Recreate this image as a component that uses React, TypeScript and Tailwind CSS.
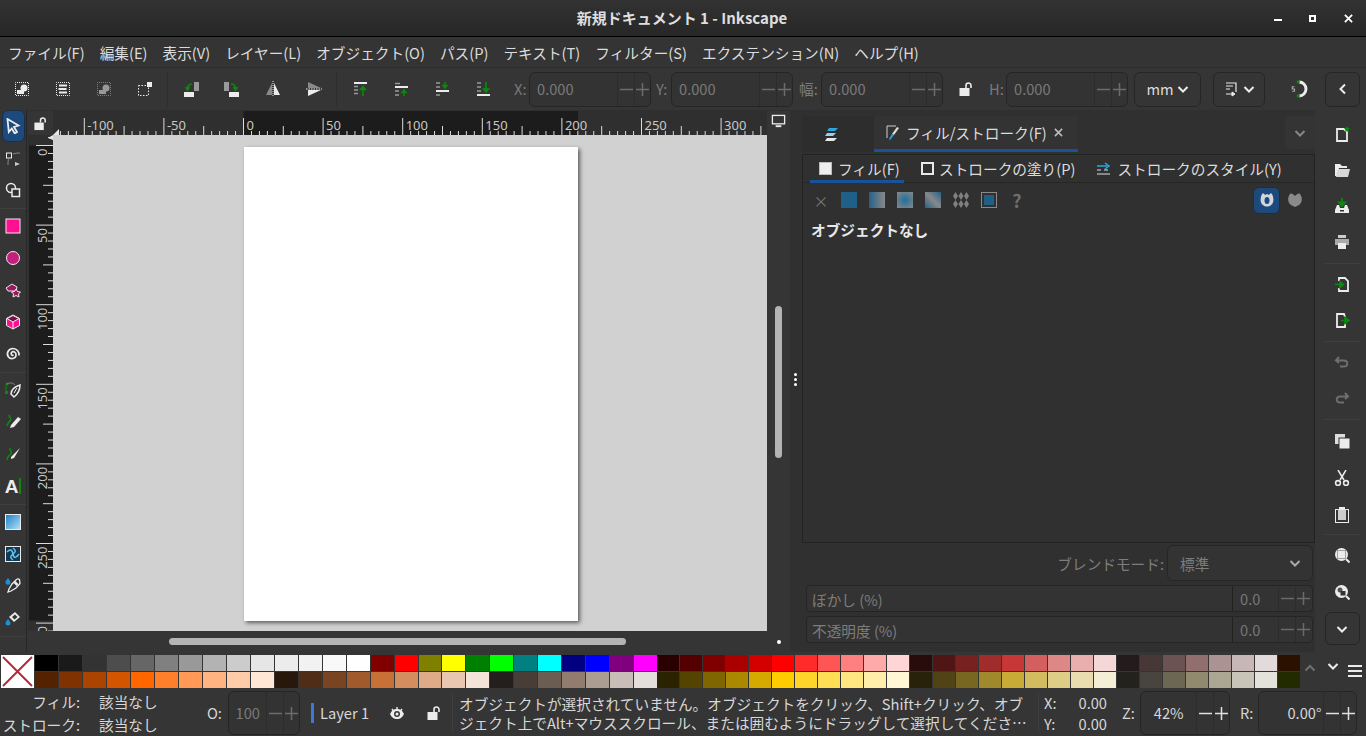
import { ReactNode } from "react";

const W = "#ececec";
const G = "#0a8a0a";
const DIM = "#7d7d7d";

function Ic({ children, size = 16 }: { children: ReactNode; size?: number }) {
  return (
    <svg width={size} height={size} viewBox="0 0 16 16" fill="none">
      {children}
    </svg>
  );
}

const dotted = (c = W) => (
  <rect x="1.500" y="1.500" width="13" height="13" stroke={c} strokeWidth="1" strokeDasharray="1 1" strokeDashoffset="0.500" />
);

// top toolbar icons
const topIcons: ReactNode[] = [
  <Ic key="a">{dotted()}<rect x="3" y="9" width="7" height="4" fill={W} /><circle cx="10" cy="7" r="3.500" fill={W} /></Ic>,
  <Ic key="b">{dotted()}<path d="M4 4.500h8M3.500 8h8M4 11.500h8" stroke={W} strokeWidth="2" /></Ic>,
  <Ic key="c">{dotted(DIM)}<rect x="3" y="9" width="7" height="4" fill="#999" /><circle cx="10" cy="7" r="3.500" fill="#999" /></Ic>,
  <Ic key="d"><path d="M1.500 4.500h10v10h-10z" stroke={W} strokeDasharray="1.500 1.500" /><rect x="10" y="1" width="5" height="5" fill={W} /></Ic>,
  <Ic key="e"><rect x="1" y="11" width="10" height="5" fill={W} /><rect x="11" y="1" width="5" height="9" fill="#999" /><path d="M9 3C6 3 4.500 5 4.500 8M2.500 6l2 3 2-3" stroke={G} strokeWidth="1.600" /></Ic>,
  <Ic key="f"><rect x="5" y="11" width="10" height="5" fill={W} /><rect x="0" y="1" width="5" height="9" fill="#999" /><path d="M7 3c3 0 4.500 2 4.500 5M9.500 6l2 3 2-3" stroke={G} strokeWidth="1.600" /></Ic>,
  <Ic key="g"><path d="M7 2v12H1z" fill="#8a8a8a" /><path d="M9 2v12h6z" fill={W} /><path d="M8 0v16" stroke={W} strokeDasharray="1 1" /></Ic>,
  <Ic key="h"><path d="M2 1l13 6H2z" fill="#8a8a8a" /><path d="M2 15l13-6H2z" fill={W} /><path d="M0 8h16" stroke={W} strokeDasharray="1.500 1" /></Ic>,
  <Ic key="i"><rect x="2" y="1" width="13" height="2" fill={W} /><path d="M2 5.500h4M2 9h4M2 12.500h4" stroke="#999" strokeWidth="1.600" /><path d="M11 15V6M8.500 8.500L11 5.500l2.500 3z" stroke={G} strokeWidth="1.600" fill={G} /></Ic>,
  <Ic key="j"><path d="M2 2.500h5M2 10h4M2 14h4" stroke="#999" strokeWidth="1.600" /><rect x="2" y="5" width="13" height="2" fill={W} /><path d="M11 15V10M9 11.500l2-2.500 2 2.500z" stroke={G} strokeWidth="1.500" fill={G} /></Ic>,
  <Ic key="k"><path d="M2 2h4M2 6h4M2 14h4" stroke="#999" strokeWidth="1.600" /><rect x="2" y="9" width="13" height="2" fill={W} /><path d="M11 1v5M9 4.500L11 7l2-2.500z" stroke={G} strokeWidth="1.500" fill={G} /></Ic>,
  <Ic key="l"><path d="M2 2h4M2 6h4M2 10h4" stroke="#999" strokeWidth="1.600" /><rect x="2" y="13" width="13" height="2" fill={W} /><path d="M11 1v9M8.500 8L11 11l2.500-3z" stroke={G} strokeWidth="1.600" fill={G} /></Ic>,
];

const LockOpen = ({ size = 16 }: { size?: number }) => (
  <Ic size={size}>
    <rect x="1.500" y="7" width="10" height="8" fill={W} />
    <path d="M8 7V4.500a2.500 2.500 0 0 1 5 0V7" stroke={W} strokeWidth="1.600" />
  </Ic>
);

const Chevron = ({ c = W, dir = "down" }: { c?: string; dir?: string }) => (
  <svg width="12" height="12" viewBox="0 0 12 12" fill="none">
    <path d={dir === "down" ? "M1.500 4l4.500 4.500L10.500 4" : dir === "up" ? "M1.500 8.500L6 4l4.500 4.500" : "M8 1.500L3.500 6 8 10.500"} stroke={c} strokeWidth="2" />
  </svg>
);

function PlusMinus({ c = "#6c6c6c" }: { c?: string }) {
  return (
    <>
      <span className="w-[17px] h-full border-l border-[#2c2c2c] flex items-center justify-center">
        <svg width="13" height="13" viewBox="0 0 13 13"><path d="M0 6.500h13" stroke={c} strokeWidth="1.500" /></svg>
      </span>
      <span className="w-[16px] h-full border-l border-[#2c2c2c] flex items-center justify-center">
        <svg width="13" height="13" viewBox="0 0 13 13"><path d="M0 6.500h13M6.500 0v13" stroke={c} strokeWidth="1.500" /></svg>
      </span>
    </>
  );
}

function Field({ value }: { value: string }) {
  return (
    <div className="w-[122px] h-[35px] rounded-md border border-[#252525] bg-[#333333] flex items-center shrink-0 text-[#7a7a7a]">
      <span className="flex-1 pl-[7px]">{value}</span>
      <PlusMinus />
    </div>
  );
}

const menus = ["ファイル(F)", "編集(E)", "表示(V)", "レイヤー(L)", "オブジェクト(O)", "パス(P)", "テキスト(T)", "フィルター(S)", "エクステンション(N)", "ヘルプ(H)"];

// left toolbox, null = separator
const P = "#ff0f94";
const tools: (ReactNode | null)[] = [
  <Ic key="sel"><path d="M2.500 1l11 6.500-4.500 1.500 3 5-2.200 1.500-3-5-3 3.500z" stroke={W} strokeWidth="1.800" /></Ic>,
  <Ic key="node"><rect x="1.500" y="3" width="5" height="5" stroke={W} /><path d="M8 4c3-1 5-1 7-1M4 8c-1 2-1 4-1 7" stroke="#888" /><path d="M10 12l5 2-5 2z" fill="#ccc" /></Ic>,
  <Ic key="shape"><circle cx="6" cy="6" r="4.500" stroke={W} strokeWidth="1.500" /><rect x="7" y="7" width="7.500" height="7.500" fill="#333" stroke={W} strokeWidth="1.500" /></Ic>,
  null,
  <Ic key="rect"><rect x="1" y="1" width="14" height="14" fill={P} stroke={W} strokeWidth="1" /></Ic>,
  <Ic key="circ"><circle cx="8" cy="8" r="6.500" fill="#c41e7e" stroke={W} strokeWidth="1" /></Ic>,
  <Ic key="star"><path d="M1 6l6-4 5 3-1 4H3z" fill="#a0175f" stroke={W} /><path d="M11 7l1.500 2.500 3 .5-2 2 .5 3-3-1.500-3 1.500.5-3-2-2 3-.5z" fill="#a0175f" stroke={W} /></Ic>,
  <Ic key="box"><path d="M8 1l6.500 3.500v7L8 15l-6.500-3.500v-7z" fill={P} stroke={W} /><path d="M8 1.500L14 4.500 8 8 2 4.500z" fill="#7a0f4c" stroke={W} /><path d="M8 8v7" stroke={W} /></Ic>,
  <Ic key="spiral"><path d="M8.500 9c-1.500 1-3-1-2-2.500 2-2 5 0 4.500 3-.5 3.500-5.500 4-7.500 1.500C1 8 3 2.500 8 2.500c4 0 6.500 3.500 6 7" stroke={W} strokeWidth="1.700" /></Ic>,
  null,
  <Ic key="pen"><path d="M9 15l-3-3c0-4 3-7 9-9 0 5-2 9-6 12z" stroke={W} strokeWidth="1.500" /><path d="M9 11l3-5" stroke={W} /><path d="M1 3v8" stroke={G} /><rect x="0" y="9" width="3" height="3" fill={G} /><circle cx="2" cy="2" r="1.500" fill={G} /><path d="M2 2c4-2 6-1 8 1" stroke="#888" /></Ic>,
  <Ic key="pencil"><path d="M6 11l7-8 3 2-7 8-4 1z" fill={W} /><path d="M5 1c-3 1 3 4 0 6-2 1-2 3-3 5" stroke={G} strokeWidth="1.600" /></Ic>,
  <Ic key="call"><path d="M6 11l9-9-6 10-3 1z" fill={W} /><path d="M5 2c-1 3 3 3 1 6-2 2-4 2-4 6" stroke={G} strokeWidth="1.600" /></Ic>,
  <div key="text" className="flex items-center gap-[1px]">
    <span className="text-[19px] font-bold leading-none text-[#ececec] font-['Liberation_Sans',sans-serif]">A</span>
    <span className="w-[2px] h-[16px] bg-[#0a8a0a]" />
  </div>,
  null,
  <Ic key="grad"><defs><linearGradient id="lg" x1="0" y1="0" x2="1" y2="1"><stop offset="0" stopColor="#1b7fc4" /><stop offset="1" stopColor="#b5e2fa" /></linearGradient></defs><rect x=".5" y=".5" width="15" height="15" fill="url(#lg)" stroke={W} /></Ic>,
  <Ic key="mesh"><rect x=".5" y=".5" width="15" height="15" fill="#123a55" stroke={W} /><path d="M2 6c3-3 5-3 6 2s3 4 6 0M8 2c3 2 3 4 0 6s-3 4 0 6" stroke="#6cc3ee" strokeWidth="1.500" /></Ic>,
  <Ic key="drop"><path d="M14.500 1.500c-1-1-2.500-1-3.500.5L7 6l-3 5-1 3 3-1 5-3 4-4.500z" stroke={W} strokeWidth="1.300" fill="#333" /><path d="M9.500 4l3 3" stroke={W} strokeWidth="2.500" /><path d="M3 0c1.500 2 2.500 3 2.500 4.200a2.500 2.500 0 0 1-5 0C.5 3 1.500 2 3 0z" fill="#1c8fd6" /></Ic>,
  <Ic key="bucket"><path d="M4 7l6-5 5 5-6 5z" fill={W} /><path d="M7 7l3-2.500 2.500 2.500-3 2.500z" fill="#333" /><path d="M3 9c1.500 2 2.500 3 2.500 4a2.500 2.500 0 0 1-5 0c0-1 1-2 2.500-4z" fill="#1c8fd6" /></Ic>,
  null,
  <Ic key="tweak"><path d="M1 15c2-4 5-7 8-8 3 1 5 4 6 8z" fill={W} /></Ic>,
];

const swA1 = ["000000","1a1a1a","333333","4d4d4d","666666","808080","999999","b3b3b3","cccccc","e6e6e6","ececec","f2f2f2","f9f9f9","ffffff","800000","ff0000","808000","ffff00","008000","00ff00","008080","00ffff","000080","0000ff","800080","ff00ff"];
const swA2 = ["552200","803300","aa4400","d45500","ff6600","ff7f2a","ff9955","ffb380","ffccaa","ffe6d5","28170b","502d16","784421","a05a2c","c87137","d38d5f","deaa87","e9c6af","f4e3d7","241f1c","483e37","6c5d53","917c6f","ac9d93","c8beb7","e3dedb"];
const swB1 = ["2b0000","550000","800000","aa0000","d40000","ff0000","ff2a2a","ff5555","ff8080","ffaaaa","ffd5d5","280b0b","501616","782121","a02c2c","c83737","d35f5f","de8787","e9afaf","f4d7d7","241c1c","483737","6c5353","916f6f","ac9393","c8b7b7","e3dbdb","2b1100"];
const swB2 = ["2b2200","554400","806600","aa8800","d4aa00","ffcc00","ffd42a","ffdd55","ffe680","ffeeaa","fff6d5","28220b","504416","786721","a0892c","c8ab37","d3bc5f","decd87","e9ddaf","f4eed7","24221c","48453e","6c6753","918a6f","aca793","c8c4b7","e3e2db","222b00"];

function SwatchRow({ colors }: { colors: string[] }) {
  return (
    <div className="flex h-[16px] gap-px">
      {colors.map((c, i) => (
        <div key={i} className="flex-1" style={{ backgroundColor: `#${c}` }} />
      ))}
    </div>
  );
}

function HRuler() {
  const ticks = [];
  const x0 = 243.5 - 53;
  const step = 7.96;
  for (let i = -24; i <= 65; i++) {
    const x = x0 + i * step;
    const major = i % 10 === 0;
    const mid = i % 5 === 0;
    ticks.push(<line key={i} x1={x} x2={x} y1={major ? 7 : mid ? 15 : 20} y2={24} stroke="#dcdcdc" strokeWidth="1" />);
    if (major) {
      ticks.push(<text key={`t${i}`} x={x + 3} y={19} fill="#c8c8c8" fontSize="13">{i * 5}</text>);
    }
  }
  return (
    <svg width="714" height="24" className="block font-['Noto_Sans',sans-serif]">
      <rect x={x0} width="334.500" height="24" fill="#1c1c1c" />
      {ticks}
      <path d="M0 24l6-6v6z" fill="#e8e8e8" />
    </svg>
  );
}

function VRuler() {
  const ticks = [];
  const y0 = 10.5;
  const step = 7.96;
  for (let i = -1; i <= 61; i++) {
    const y = y0 + i * step;
    const major = i % 10 === 0;
    const mid = i % 5 === 0;
    ticks.push(<line key={i} y1={y} y2={y} x1={major ? 8 : mid ? 15 : 20} x2={25} stroke="#dcdcdc" strokeWidth="1" />);
    if (major) {
      ticks.push(
        <text key={`t${i}`} transform={`translate(19 ${y + 3}) rotate(-90)`} textAnchor="end" fill="#c8c8c8" fontSize="13">
          {i * 5}
        </text>
      );
    }
  }
  return (
    <svg width="25" height="496" className="block font-['Noto_Sans',sans-serif]">
      <rect x="1" y="10.500" width="24" height="475" fill="#1c1c1c" />
      {ticks}
      <path d="M25 0l-5 3 5 2z" fill="#e8e8e8" />
    </svg>
  );
}

const rightIcons: (ReactNode | null)[] = [
  <Ic key="n"><path d="M3 3h7l3 3v9H3z" stroke={W} strokeWidth="1.800" /><path d="M13 0l1 2 2 .3-1.500 1.500.5 2.200-2-1-2 1 .5-2.200L10 2.300l2-.3z" fill={G} /></Ic>,
  <Ic key="o"><path d="M1 2h5l2 2h5v2H5L3 14H1z" fill={W} /><path d="M4 7h12l-2 8H2z" fill="#d8d8d8" /></Ic>,
  <Ic key="s"><path d="M8 0v7M5 4.500L8 8l3-3.500z" stroke={G} strokeWidth="1.800" fill={G} /><path d="M3 7h2l1 3h4l1-3h2l2 5v3H1v-3z" fill={W} /><rect x="6" y="12" width="4" height="1.500" fill="#333" /></Ic>,
  <Ic key="p"><rect x="4" y="1" width="8" height="3" fill="#ccc" /><path d="M1 5h14v6H1z" fill="#aaa" /><rect x="4" y="9" width="8" height="6" fill={W} /></Ic>,
  null,
  <Ic key="i"><path d="M5 5V2h6l3 3v10H5v-3" stroke={W} strokeWidth="1.800" /><path d="M1 8.500h7M6 5.500l3.500 3-3.500 3z" stroke={G} strokeWidth="1.600" fill={G} /></Ic>,
  <Ic key="e"><path d="M11 5l-1-3H3v13h8v-3" stroke={W} strokeWidth="1.800" /><path d="M7 8.500h6M11 5.500l4 3-4 3z" stroke={G} strokeWidth="1.600" fill={G} /></Ic>,
  null,
  <Ic key="u"><path d="M5 3L2 6.500 5 9M2.500 6.500h7c5 0 5 6 0 6H6" stroke="#6e6e6e" strokeWidth="2" /></Ic>,
  <Ic key="r"><path d="M11 3l3 3.500L11 9M13.500 6.500h-7c-5 0-5 6 0 6H10" stroke="#6e6e6e" strokeWidth="2" /></Ic>,
  null,
  <Ic key="cp"><rect x="1" y="1" width="10" height="10" fill="#ddd" /><rect x="5" y="5" width="11" height="11" fill={W} stroke="#333" /></Ic>,
  <Ic key="ct"><path d="M4 0l6 10M12 0L6 10" stroke={W} strokeWidth="1.500" /><circle cx="4" cy="13" r="2.400" stroke={W} strokeWidth="1.600" /><circle cx="12" cy="13" r="2.400" stroke={W} strokeWidth="1.600" /></Ic>,
  <Ic key="pa"><rect x="1.500" y="2.500" width="13" height="13" stroke={W} /><path d="M4 2h8v11H4z" fill="#ccc" /><rect x="5" y="0" width="6" height="3" fill={W} /></Ic>,
  null,
  <Ic key="z1"><circle cx="7.500" cy="7.500" r="6.500" fill={W} /><rect x="3.500" y="3.500" width="8" height="8" stroke="#555" strokeDasharray="1 1" /><path d="M12 12l3.500 3.500" stroke={W} strokeWidth="2" /></Ic>,
  <Ic key="z2"><circle cx="7.500" cy="7.500" r="6.500" fill={W} /><circle cx="6" cy="6" r="2.500" fill="#555" /><rect x="6.500" y="7" width="5" height="4.500" fill="#333" /><path d="M12 12l3.500 3.500" stroke={W} strokeWidth="2" /></Ic>,
];

const paintIcons = [
  <span key="x" className="text-[15px] leading-none text-[#777]">×</span>,
  <div key="1" className="w-[16px] h-[16px] bg-[#1f6088]" />,
  <div key="2" className="w-[16px] h-[16px] bg-gradient-to-r from-[#1f6088] to-[#888888]" />,
  <div key="3" className="w-[16px] h-[16px] bg-[radial-gradient(circle,#1f6f9e,#888888)]" />,
  <div key="4" className="w-[16px] h-[16px] bg-gradient-to-tr from-[#1f6088] via-[#888888] to-[#1f6088]" />,
  <Ic key="5"><path d="M2.500 0L5 4 2.500 8 0 4zM8 0l2.500 4L8 8 5.500 4zM13.500 0L16 4l-2.500 4L11 4zM2.500 8L5 12l-2.500 4L0 12zM8 8l2.500 4L8 16l-2.500-4zM13.500 8l2.500 4-2.500 4-2.500-4z" fill="#808080" /></Ic>,
  <div key="6" className="w-[16px] h-[16px] border border-[#8a8a8a] p-[2px]"><div className="w-full h-full bg-[#1f6088]" /></div>,
  <span key="q" className="text-[18px] font-bold leading-none text-[#6e6e6e]">?</span>,
];

export default function App() {
  return (
    <div className="w-[1366px] h-[736px] overflow-hidden flex flex-col bg-[#353535] text-[14.670px] leading-[20px] text-[#e4e4e4] font-['Noto_Sans_CJK_JP','Noto_Sans',sans-serif]">
      {/* title bar */}
      <div className="h-[37px] shrink-0 flex items-center bg-gradient-to-b from-[#323232] to-[#272727] border-b border-black">
        <div className="w-[1259px] pl-[107px] text-center text-[15px] font-bold text-[#dedede]">新規ドキュメント 1 - Inkscape</div>
        <div className="flex items-center">
          <div className="w-[35px] ml-[3px] flex justify-center"><div className="w-[8px] h-[2px] mt-[4px] bg-white" /></div>
          <div className="w-[35px] flex justify-center"><div className="w-[3px] h-[3px] border-[2px] border-white box-content" /></div>
          <div className="w-[36px] flex justify-center">
            <svg width="9" height="9" viewBox="0 0 10 10"><path d="M1 1l8 8M9 1l-8 8" stroke="#fff" strokeWidth="2" /></svg>
          </div>
        </div>
      </div>

      {/* menu bar */}
      <div className="h-[31px] shrink-0 flex items-center gap-[15px] pl-[8px] bg-[#343434] border-b border-[#2c2c2c] text-[#dcdcdc]">
        {menus.map((m) => (
          <span key={m} className="pt-px">{m}</span>
        ))}
      </div>

      {/* command toolbar */}
      <div className="h-[42px] shrink-0 flex items-center pl-px text-[#7a7a7a]">
        {topIcons.slice(0, 4).map((ic, i) => (
          <div key={i} className="w-[41px] flex justify-center">{ic}</div>
        ))}
        <div className="w-[5px] h-[34px] flex justify-center"><div className="w-px bg-[#2d2d2d]" /></div>
        {topIcons.slice(4, 8).map((ic, i) => (
          <div key={i} className="w-[41px] flex justify-center">{ic}</div>
        ))}
        <div className="w-[5px] h-[34px] flex justify-center"><div className="w-px bg-[#2d2d2d]" /></div>
        {topIcons.slice(8).map((ic, i) => (
          <div key={i} className="w-[41px] flex justify-center">{ic}</div>
        ))}
        <span className="w-[15px] ml-[11px]">X:</span>
        <Field value="0.000" />
        <span className="w-[15px] ml-[5px]">Y:</span>
        <Field value="0.000" />
        <span className="w-[22px] ml-[6px] whitespace-nowrap">幅:</span>
        <Field value="0.000" />
        <div className="w-[46px] flex justify-center"><LockOpen /></div>
        <span className="w-[17px]">H:</span>
        <Field value="0.000" />
        <div className="ml-[6px] w-[67px] h-[35px] rounded-md border border-[#252525] flex items-center justify-center gap-[3px] text-[#dcdcdc]">
          mm <Chevron />
        </div>
        <div className="ml-[12px] w-[52px] h-[35px] rounded-md border border-[#252525] flex items-center justify-center gap-[3px]">
          <Ic><path d="M2 2h10v9M2 5h7M2 8h4" stroke={W} strokeWidth="1.200" /><path d="M2 13h8M8 11l3 2-3 2z" stroke={W} fill={W} /></Ic>
          <Chevron />
        </div>
        <div className="w-[60px] pl-[8px] flex justify-center">
          <Ic size={18}><path d="M8 1.800a6.200 6.200 0 0 1 0 12.400" stroke={W} strokeWidth="2.600" /><rect x="6" y="0.500" width="2.600" height="2.600" fill={G} /><rect x="6" y="12.900" width="2.600" height="2.600" fill={G} /><path d="M4 6H2v2h2v2H2" stroke="#aaa" /></Ic>
        </div>
        <div className="w-[35px] h-[35px] rounded-md border border-[#252525] flex items-center justify-center"><Chevron dir="left" /></div>
      </div>

      {/* main area */}
      <div className="h-[542px] shrink-0 flex overflow-hidden">
        {/* toolbox */}
        <div className="w-[26px] mr-px shrink-0 flex flex-col items-center border-r border-[#262626] box-content">
          {tools.map((t, i) =>
            t === null ? (
              <div key={i} className="h-[4px] w-full flex items-center shrink-0"><div className="h-px w-full bg-[#3f3f3f]" /></div>
            ) : (
              <div key={i} className={`h-[32px] shrink-0 flex items-center justify-center ${i === 0 ? "w-[23px] rounded-md border border-[#1d2d44] bg-[#1d4a7c]" : "w-full"}`}>
                {t}
              </div>
            )
          )}
        </div>

        {/* canvas with rulers */}
        <div className="w-[762px] shrink-0 flex flex-col">
          <div className="h-[25px] shrink-0 pt-px flex bg-[#2f2f2f]">
            <div className="w-[25px] flex items-center justify-center bg-[#353535]"><LockOpen size={15} /></div>
            <HRuler />
            <div className="w-[23px] flex justify-center pt-[3px] bg-[#353535]">
              <Ic size={15}><rect x="1.500" y="1.500" width="13" height="9" stroke={W} strokeWidth="1.400" /><rect x="5" y="12" width="6" height="2" fill={W} /></Ic>
            </div>
          </div>
          <div className="flex h-[496px] shrink-0">
            <div className="w-[25px] bg-[#2f2f2f]"><VRuler /></div>
            <div className="w-[714px] bg-[#d1d1d1] pl-[191px] pt-[12px]">
              <div className="w-[334px] h-[474px] bg-white shadow-[2px_2px_4px_rgba(0,0,0,0.55)]" />
            </div>
            <div className="w-[23px] flex justify-center pt-[171px]">
              <div className="w-[7px] h-[152px] rounded-full bg-[#b4b4b4]" />
            </div>
          </div>
          <div className="flex-1 flex items-center pl-[141px]">
            <div className="w-[457px] h-[7px] rounded-full bg-[#b4b4b4] mr-[151px]" />
            <div className="w-[4px] h-[4px] rounded-full bg-white" />
          </div>
        </div>

        {/* panel grip */}
        <div className="w-[12px] shrink-0 flex flex-col items-center justify-center gap-[2px] pr-px pb-[3px] bg-[#303030]">
          <div className="w-[3px] h-[3px] rounded-full bg-white" />
          <div className="w-[3px] h-[3px] rounded-full bg-white" />
          <div className="w-[3px] h-[3px] rounded-full bg-white" />
        </div>

        {/* dock */}
        <div className="w-[513px] shrink-0 flex flex-col bg-[#303030] pt-[6px]">
          <div className="h-[36px] shrink-0 flex items-stretch">
            <div className="w-[72px] flex items-center justify-center pr-[12px] bg-[#2d2d2d]">
              <Ic><path d="M5 2h9l-3 3H3z" fill="#2aa7e0" /><path d="M3 7h9l-3 3H1z" fill="#8fd3f2" /><path d="M3 12h10l-3 3H1z" fill="#e8e8e8" /></Ic>
            </div>
            <div className="w-[204px] pl-[11px] flex items-center gap-[5px] border-b-[3px] border-[#1a5299] bg-[#333333] text-[#dcdcdc]">
              <Ic><path d="M11 1H2v12" stroke="#cfcfcf" /><path d="M12 2l2 1-5 7-2-1z" fill="#dcdcdc" /><path d="M7 9l2 1-4 5-1-1z" fill="#2aa7e0" /></Ic>
              <span>フィル/ストローク(F)</span>
              <svg width="9" height="9" viewBox="0 0 10 10" className="ml-[2px]"><path d="M1 1l8 8M9 1l-8 8" stroke="#bbb" strokeWidth="1.800" /></svg>
            </div>
            <div className="flex-1" />
            <div className="w-[30px] mb-[3px] rounded bg-[#343434] flex items-center justify-center"><Chevron c="#888" /></div>
          </div>
          <div className="h-[389px] shrink-0 mt-[2px] border border-[#222222] flex flex-col bg-[#303030]">
            <div className="h-[28px] shrink-0 flex items-center text-[#dcdcdc] border-b border-[#262626] relative">
              <div className="ml-[7px] w-[94px] h-[28px] flex items-center border-b-[3px] border-[#1a5299] pl-[9px] gap-[6px] pt-[3px]">
                <div className="w-[13px] h-[13px] bg-[#eeeeee] border border-[#bbb]" />
                <span>フィル(F)</span>
              </div>
              <div className="ml-[17px] w-[13px] h-[13px] border-[2px] border-[#e8e8e8]" />
              <span className="ml-[5px]">ストロークの塗り(P)</span>
              <div className="ml-[22px]">
                <svg width="14" height="14" viewBox="0 0 14 14"><path d="M0 4h10M8 1l4 3-4 3" stroke="#2aa7e0" strokeWidth="1.500" fill="none" /><path d="M0 8h4M7 8h4M0 12h13" stroke="#ddd" strokeWidth="1.200" /></svg>
              </div>
              <span className="ml-[6px]">ストロークのスタイル(Y)</span>
            </div>
            <div className="h-[34px] shrink-0 flex items-center">
              {paintIcons.map((p, i) => (
                <div key={i} className="w-[28px] flex justify-center first:ml-[4px]">{p}</div>
              ))}
              <div className="flex-1" />
              <div className="w-[27px] h-[27px] rounded-md border border-[#1d2d44] bg-[#1d4a7c] flex items-center justify-center mr-[1px]">
                <Ic><path d="M3 2c-2 4-2 9 1 11 2 2 6 2 8 0 3-2 3-7 1-11-1.500-1-2.500 0-3 1L8 2 6 3C5.500 2 4.500 1 3 2z" fill="#cfd6de" /><ellipse cx="8" cy="8.500" rx="2.500" ry="3.500" fill="#1d4a7c" /></Ic>
              </div>
              <div className="w-[28px] flex justify-center mr-[5px]">
                <Ic><path d="M3 2c-3 4-2 9 1 11l4 2 4-2c3-2 4-7 1-11-1.500-1-3 0-5 2-2-2-3.500-3-5-2z" fill="#8a8a8a" /></Ic>
              </div>
            </div>
            <div className="pl-[8px] pt-[3px] font-bold text-[#e8e8e8]">オブジェクトなし</div>
          </div>
          <div className="flex-1 flex flex-col bg-[#303030] text-[#7d7d7d]">
            <div className="h-[36px] mt-[2px] shrink-0 flex items-center justify-end">
              <span className="mr-[3px] pt-[2px]">ブレンドモード:</span>
              <div className="w-[146px] h-[36px] mr-[2px] rounded-md border border-[#252525] bg-[#333333] flex items-center justify-between pl-[12px] pr-[11px]">
                <span className="pt-px">標準</span>
                <Chevron c="#aaaaaa" />
              </div>
            </div>
            {["ぼかし (%)", "不透明度 (%)"].map((label) => (
              <div key={label} className="h-[27px] ml-[4px] mr-[2px] mt-[4px] shrink-0 rounded border border-[#252525] bg-[#333333] flex items-center">
                <span className="flex-1 pl-[5px] pt-[2px]">{label}</span>
                <div className="w-[80px] h-full border-l border-[#222222] flex items-center text-[#777777]">
                  <span className="pl-[7px] w-[45px]">0.0</span>
                  <PlusMinus c="#6a6a6a" />
                </div>
              </div>
            ))}
          </div>
        </div>

        {/* commands bar */}
        <div className="flex-1 flex flex-col items-center pl-[3px] pt-[6px]">
          {rightIcons.map((ic, i) =>
            ic === null ? (
              <div key={i} className={`${i === 14 ? "h-[3px]" : "h-[6px]"} w-[36px] shrink-0 flex items-center`}><div className="h-px w-full bg-[#3f3f3f]" /></div>
            ) : (
              <div key={i} className={`${i > 10 ? "h-[37px]" : "h-[36px]"} shrink-0 flex items-center justify-center`}>{ic}</div>
            )
          )}
          <div className="w-[35px] h-[33px] mt-[2px] shrink-0 rounded-md border border-[#252525] flex items-center justify-center"><Chevron /></div>
        </div>
      </div>

      {/* palette */}
      <div className="h-[38px] shrink-0 flex items-start pt-[3px]">
        <div className="w-[33px] h-[33px] ml-[1px] bg-white shrink-0">
          <svg width="33" height="33" viewBox="0 0 33 33"><path d="M2 2l29 29M31 2L2 31" stroke="#b5293c" strokeWidth="2" /></svg>
        </div>
        <div className="w-[622px] ml-px flex flex-col gap-px shrink-0">
          <SwatchRow colors={swA1} />
          <SwatchRow colors={swA2} />
        </div>
        <div className="w-[643px] flex flex-col gap-px shrink-0">
          <SwatchRow colors={swB1} />
          <SwatchRow colors={swB2} />
        </div>
        <div className="flex-1 flex items-start h-[32px]">
          <div className="w-[20px] pt-[7px] flex justify-center"><Chevron c="#707070" dir="up" /></div>
          <div className="w-[26px] pt-[5px] flex justify-center"><Chevron /></div>
          <div className="w-[17px] pt-[10px] flex flex-col gap-[3px] items-center">
            <div className="w-[14px] h-[2px] bg-[#ececec]" /><div className="w-[14px] h-[2px] bg-[#ececec]" /><div className="w-[14px] h-[2px] bg-[#ececec]" />
          </div>
        </div>
      </div>

      {/* status bar */}
      <div className="h-[46px] shrink-0 flex items-center text-[#d8d8d8]">
        <div className="w-[80px] shrink-0 text-right leading-[23px]">
          <div>フィル:</div>
          <div className="whitespace-nowrap">ストローク:</div>
        </div>
        <div className="w-[127px] shrink-0 pl-[19px] leading-[23px]">
          <div>該当なし</div>
          <div>該当なし</div>
        </div>
        <span className="w-[21px] shrink-0">O:</span>
        <div className="w-[72px] h-[44px] shrink-0 rounded-md border border-[#252525] bg-[#333333] flex items-center text-[#7a7a7a]">
          <span className="w-[38px] text-center">100</span>
          <PlusMinus />
        </div>
        <div className="ml-[11px] w-[3px] h-[20px] bg-[#3b78d8] shrink-0" />
        <span className="ml-[6px] w-[66px] shrink-0">Layer 1</span>
        <div className="w-[22px] flex justify-center shrink-0">
          <Ic><path d="M1 9c2-4 4-5 7-5s5 1 7 5c-2 4-4 5-7 5S3 13 1 9z" fill={W} /><circle cx="8" cy="9" r="3" fill="#353535" /><circle cx="8" cy="9" r="1.500" fill={W} /><path d="M3 4l1.500 2M13 4l-1.500 2M8 2v2" stroke={W} strokeWidth="1.400" /></Ic>
        </div>
        <div className="ml-[15px] w-[22px] flex justify-center shrink-0"><LockOpen /></div>
        <div className="ml-[7px] w-[587px] pl-[6px] shrink-0 border-x border-[#3f3f3f] leading-[19px] whitespace-nowrap overflow-hidden">
          <div>オブジェクトが選択されていません。オブジェクトをクリック、Shift+クリック、オブ</div>
          <div>ジェクト上でAlt+マウススクロール、または囲むようにドラッグして選択してくださ…</div>
        </div>
        <div className="w-[63px] ml-[5px] shrink-0 leading-[21px] grid grid-cols-[1fr_auto]">
          <span>X:</span><span>0.00</span>
          <span>Y:</span><span>0.00</span>
        </div>
        <span className="ml-[15px] w-[18px] shrink-0">Z:</span>
        <div className="w-[90px] h-[44px] shrink-0 rounded-md border border-[#252525] bg-[#333333] flex items-center">
          <span className="w-[56px] text-center">42%</span>
          <PlusMinus c="#e0e0e0" />
        </div>
        <span className="ml-[10px] w-[18px] shrink-0">R:</span>
        <div className="w-[99px] h-[44px] shrink-0 rounded-md border border-[#252525] bg-[#333333] flex items-center">
          <span className="w-[65px] text-right pr-[2px]">0.00°</span>
          <PlusMinus c="#e0e0e0" />
        </div>
      </div>
    </div>
  );
}
